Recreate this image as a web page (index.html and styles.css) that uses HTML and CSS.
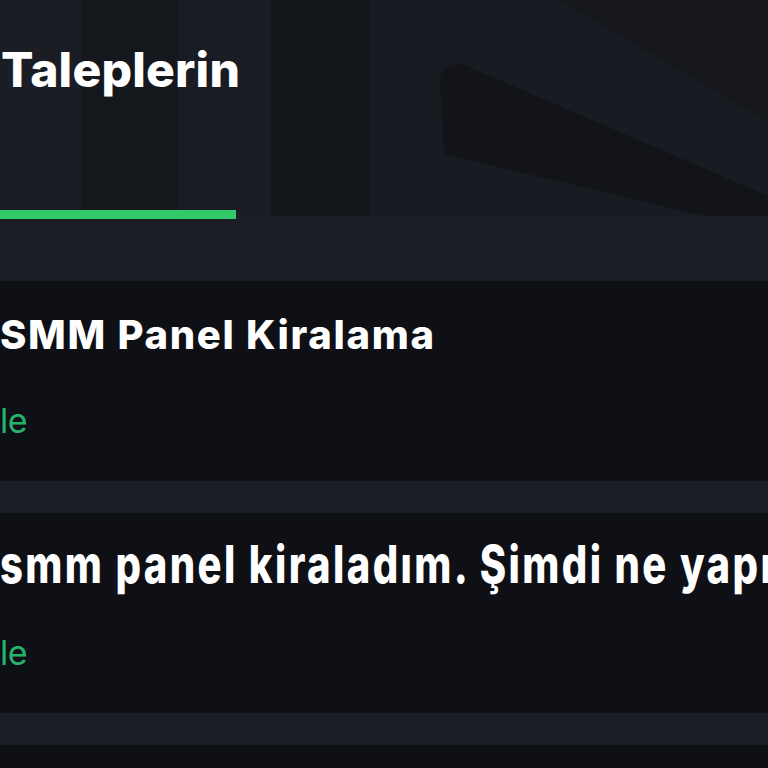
FILE: index.html
```html
<!DOCTYPE html>
<html lang="tr">
<head>
<meta charset="utf-8">
<title>Taleplerin</title>
<link rel="stylesheet" href="styles.css">
</head>
<body>
<div class="page">
  <header class="hero">
    <svg class="hero-art" width="768" height="216" viewBox="0 0 768 216" aria-hidden="true">
      <path d="M560 0 L768 0 L768 122 Z" fill="#15171b"/>
      <path d="M440 80 Q441 63 462 64 L768 196 L768 216 L705 216 L444 154 Z" fill="#121418"/>
    </svg>
    <h1 class="hero-title">Taleplerin</h1>
    <div class="tab-indicator"></div>
  </header>

  <main class="ticket-list">
    <article class="ticket">
      <h2 class="ticket-title">SMM Panel Kiralama</h2>
      <a class="ticket-link" href="#">le</a>
    </article>
    <article class="ticket">
      <h2 class="ticket-title ticket-title--tall">smm panel kiraladım. Şimdi ne yapmalıyım?</h2>
      <a class="ticket-link" href="#">le</a>
    </article>
    <article class="ticket"></article>
  </main>
</div>
</body>
</html>
```

FILE: styles.css
```css
html, body {
  margin: 0;
  padding: 0;
  background: #1b1e25;
  overflow: hidden;
}

body {
  font-family: Inter, "Liberation Sans", sans-serif;
  color: #ffffff;
}

.page {
  width: 768px;
  height: 768px;
  overflow: hidden;
}

.hero {
  position: relative;
  height: 216px;
  display: flex;
  flex-direction: column;
  justify-content: space-between;
  background: linear-gradient(to right,
    #1a1d23 0, #1a1d23 81px,
    #14171c 81px, #14171c 179px,
    #191c22 179px, #191c22 271px,
    #131619 271px, #131619 369px,
    #181b22 369px);
}

.hero-art {
  position: absolute;
  left: 0;
  top: 0;
}

.hero-title {
  position: relative;
  margin: 0;
  padding-top: 40px;
  padding-left: 1px;
  font-size: 48px;
  line-height: 60px;
  font-weight: 800;
  letter-spacing: 0.2px;
  color: #ffffff;
}

.tab-indicator {
  position: relative;
  width: 236px;
  height: 9px;
  margin-bottom: -3px;
  background: #32c96b;
}

.ticket-list {
  display: flex;
  flex-direction: column;
  gap: 32px;
  padding-top: 65px;
}

.ticket {
  height: 200px;
  background: #0e1015;
  overflow: hidden;
  display: flex;
  flex-direction: column;
  align-items: flex-start;
}

.ticket-title {
  margin: 0;
  padding-top: 30px;
  font-size: 40px;
  line-height: 48px;
  font-weight: 800;
  letter-spacing: 1.7px;
  white-space: nowrap;
  color: #ffffff;
}

.ticket-title--tall {
  padding-top: 32px;
  margin-bottom: -2px;
  letter-spacing: 2.4px;
  transform: scaleY(1.3);
  transform-origin: 0 70px;
}

.ticket-link {
  margin-top: 42px;
  font-size: 34px;
  line-height: 40px;
  font-weight: 400;
  letter-spacing: -0.6px;
  color: #22b46c;
  text-decoration: none;
}
```
